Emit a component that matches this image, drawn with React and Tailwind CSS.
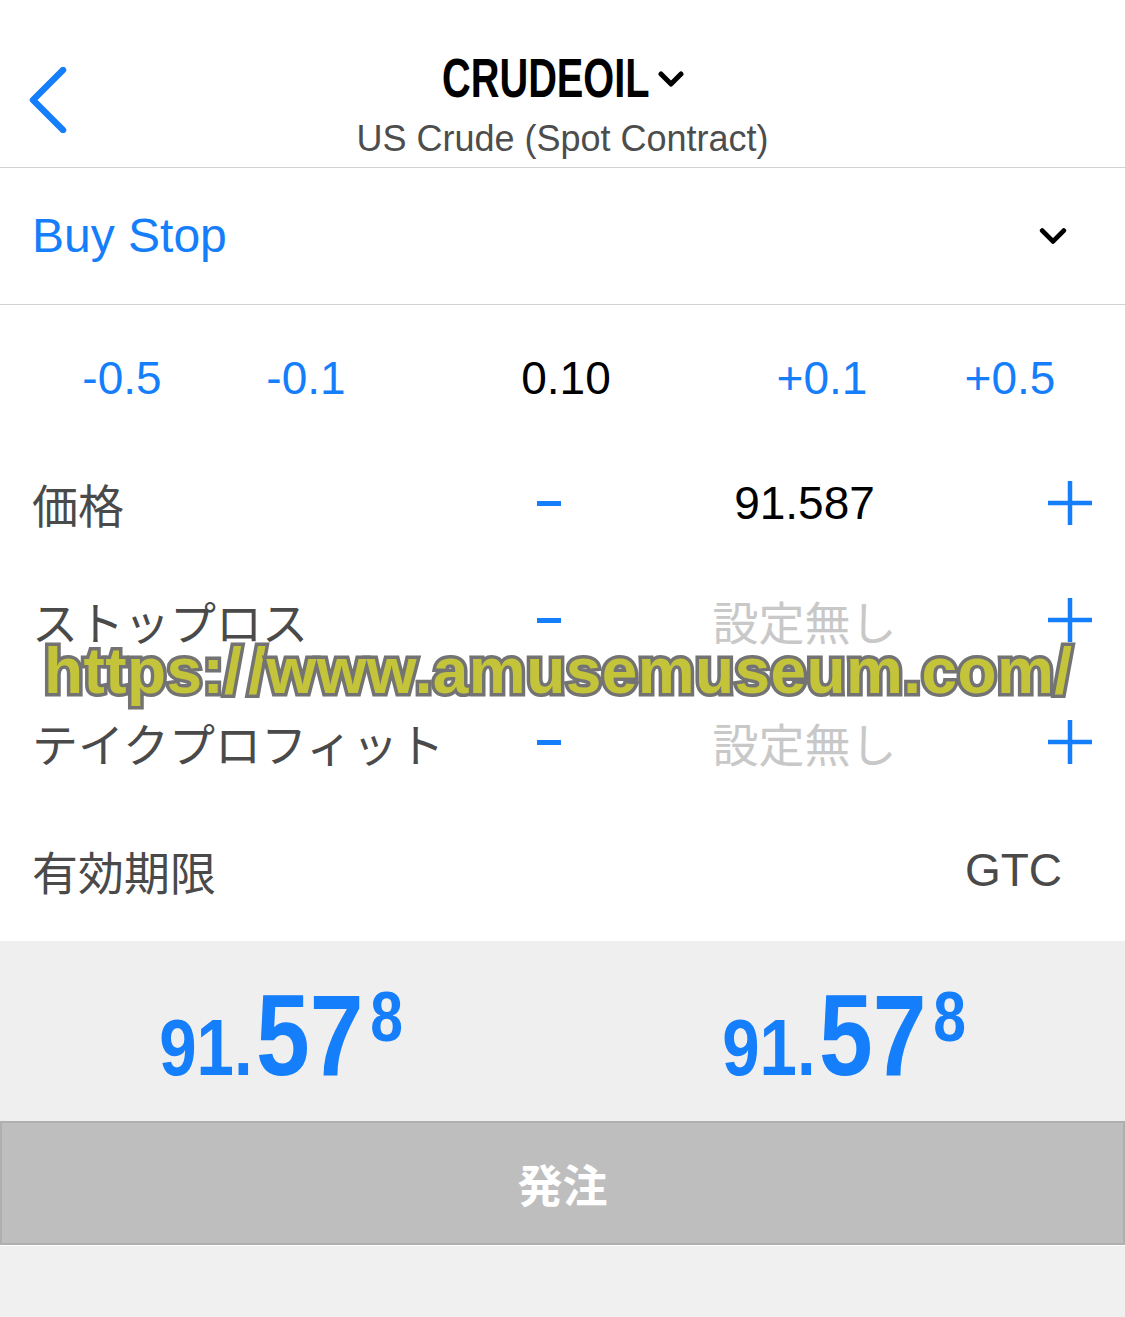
const BLUE = 'text-[#157efb]';

function Chevron({ className, stroke = 4 }) {
  return (
    <svg viewBox="0 0 26 16" className={className} fill="none">
      <path d="M3 3 L13 13 L23 3" stroke="currentColor" strokeWidth={stroke} strokeLinecap="round" strokeLinejoin="round" />
    </svg>
  );
}

function Plus() {
  return (
    <svg viewBox="0 0 44 44" className="w-[44px] h-[44px] text-[#157efb]">
      <path d="M22 0 V44 M0 22 H44" stroke="currentColor" strokeWidth="4.5" />
    </svg>
  );
}

function Minus() {
  return <div className="w-[24px] h-[5px] bg-[#157efb]" />;
}

function AdjustRow({ label, value, muted, h }) {
  return (
    <div className={`flex items-center ${h}`}>
      <div className="w-[490px] pl-[32px] text-[46px] leading-none text-[#4a4a4a] [font-family:'Noto_Sans_CJK_JP',sans-serif]">
        {label}
      </div>
      <div className="w-[118px] flex justify-center">
        <Minus />
      </div>
      <div
        className={`w-[393px] text-center text-[46px] leading-none ${
          muted
            ? "text-[#c8c8c8] [font-family:'Noto_Sans_CJK_JP',sans-serif]"
            : "text-black [font-family:'Liberation_Sans',sans-serif]"
        }`}
      >
        {value}
      </div>
      <div className="ml-[14px] w-[110px] flex justify-center">
        <Plus />
      </div>
    </div>
  );
}

// condensed look: Liberation Sans Bold squeezed horizontally
function Price() {
  return (
    <div className="flex items-baseline text-[#157efb] font-bold leading-none scale-x-[0.84]">
      <span className="text-[80px]">91.</span>
      <span className="text-[115px] ml-[4px]">57</span>
      <span className="text-[70px] self-start mt-[4px] ml-[8px]">8</span>
    </div>
  );
}

export default function App() {
  return (
    <div className="w-[1125px] h-[1317px] bg-white flex flex-col [font-family:'Liberation_Sans',sans-serif] overflow-hidden">
      {/* header */}
      <div className="relative h-[167px] flex flex-col items-center">
        <svg viewBox="0 0 40 66" className="absolute left-[28px] top-[67px] w-[40px] h-[66px] text-[#157efb]" fill="none">
          <path d="M35 3 L5 33 L35 63" stroke="currentColor" strokeWidth="6.5" strokeLinecap="round" strokeLinejoin="round" />
        </svg>
        <div className="mt-[50px] flex items-center">
          <span className="inline-block w-[207px] whitespace-nowrap">
            <span className="inline-block origin-left scale-x-[0.71] text-[56px] leading-none font-bold text-black">
              CRUDEOIL
            </span>
          </span>
          <Chevron className="w-[26px] h-[18px] ml-[9px] mt-[2px] text-black" stroke={5} />
        </div>
        <div className="mt-[15px] text-[36px] leading-none text-[#4d4d4d]">US Crude (Spot Contract)</div>
      </div>
      <div className="h-px bg-[#d2d2d2]" />

      {/* order type */}
      <div className="h-[136px] flex items-center justify-between pl-[32px] pr-[58px]">
        <span className={`text-[48px] leading-none ${BLUE}`}>Buy Stop</span>
        <Chevron className="w-[28px] h-[18px] text-black" stroke={4.5} />
      </div>
      <div className="h-px bg-[#d2d2d2]" />

      {/* step row */}
      <div className="h-[146px] flex items-center pl-[37px] text-[46px] leading-none">
        <span className={`w-[170px] text-center ${BLUE}`}>-0.5</span>
        <span className={`w-[170px] ml-[14px] text-center ${BLUE}`}>-0.1</span>
        <span className="w-[170px] ml-[90px] text-center text-black">0.10</span>
        <span className={`w-[170px] ml-[86px] text-center ${BLUE}`}>+0.1</span>
        <span className={`w-[170px] ml-[18px] text-center ${BLUE}`}>+0.5</span>
      </div>

      {/* adjust rows */}
      <div className="relative">
        <AdjustRow h="h-[104px]" label="価格" value="91.587" />
        <AdjustRow h="h-[130px]" label="ストップロス" value="設定無し" muted />
        <AdjustRow h="h-[114px]" label="テイクプロフィット" value="設定無し" muted />
        <div className="absolute left-[44px] top-[188px] whitespace-nowrap text-[64px] leading-none font-bold tracking-[0.4px] text-[#c4c43a] [-webkit-text-stroke:7px_#737373] [paint-order:stroke_fill]">
          https:/<span className="ml-[6px]">/</span>www.amusemuseum.com/
        </div>
      </div>

      {/* expiry */}
      <div className="h-[142px] flex items-center justify-between pl-[32px] pr-[63px]">
        <span className="text-[46px] leading-none text-[#4a4a4a] [font-family:'Noto_Sans_CJK_JP',sans-serif]">有効期限</span>
        <span className="text-[46px] leading-none text-[#4a4a4a]">GTC</span>
      </div>

      {/* quotes */}
      <div className="h-[180px] bg-[#efefef] grid grid-cols-2 items-center pt-[8px]">
        <div className="flex justify-center">
          <Price />
        </div>
        <div className="flex justify-center">
          <Price />
        </div>
      </div>

      {/* submit */}
      <div className="h-[124px] bg-[#bebebe] border-2 border-[#afafaf] flex items-center justify-center">
        <span className="text-[45px] leading-none font-bold text-white [font-family:'Noto_Sans_CJK_JP',sans-serif]">発注</span>
      </div>
      <div className="h-px bg-white" />
      <div className="flex-1 bg-[#f0f0f0]" />
    </div>
  );
}
